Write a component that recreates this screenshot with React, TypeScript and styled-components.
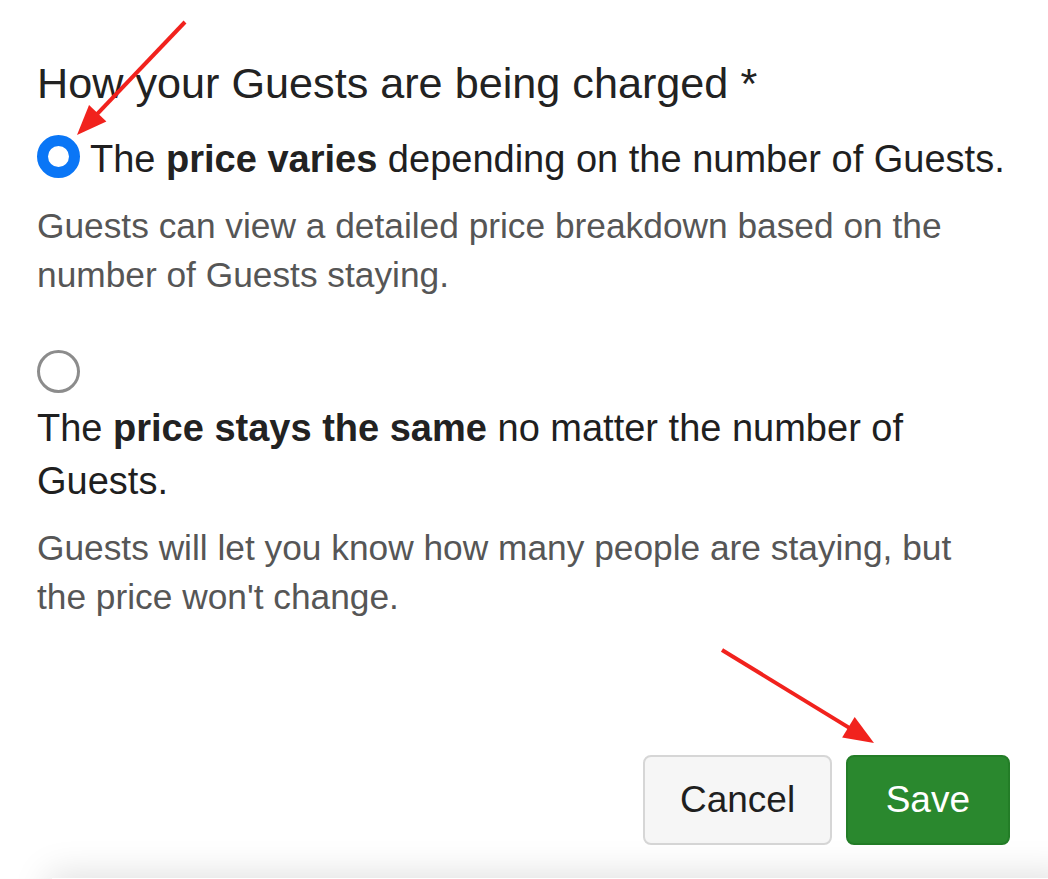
import * as React from "react";
import styled, { createGlobalStyle } from "styled-components";

const GlobalStyle = createGlobalStyle`
  html, body {
    margin: 0;
    padding: 0;
    background: #ffffff;
    overflow: hidden;
  }
  body {
    font-family: "Liberation Sans", Helvetica, Arial, sans-serif;
    color: #222222;
  }
`;

const Page = styled.div`
  position: relative;
  width: 1048px;
  height: 879px;
  box-sizing: border-box;
  padding: 53px 39px 0 37px;
  display: flex;
  flex-direction: column;
`;

const Heading = styled.h3`
  margin: 0 0 20px;
  font-size: 43.2px;
  font-weight: 400;
  line-height: 60px;
  color: #222222;
`;

const Option = styled.div<{ $first?: boolean }>`
  margin-top: ${(p) => (p.$first ? "0" : "49px")};
`;

const OptionRow = styled.label`
  display: flex;
  flex-wrap: wrap;
  align-items: flex-start;
  column-gap: 10px;
  row-gap: 9px;
  cursor: pointer;
`;

const Radio = styled.span<{ $checked?: boolean }>`
  flex: none;
  box-sizing: border-box;
  width: 43px;
  height: 43px;
  margin-top: 2px;
  border-radius: 50%;
  background: #ffffff;
  border: ${(p) => (p.$checked ? "11.5px solid #0a76f6" : "3px solid #8c8c8c")};
`;

const OptionText = styled.span`
  font-size: 38px;
  line-height: 53px;
  color: #1f1f1f;

  b {
    font-weight: 700;
    color: #222222;
  }
`;

const Help = styled.p`
  margin: 15px 0 0;
  font-size: 35.3px;
  line-height: 49px;
  color: #565656;
`;

const Actions = styled.div`
  margin: 134px -1px 0 0;
  display: flex;
  justify-content: flex-end;
  gap: 14px;
`;

const Button = styled.button<{ $primary?: boolean }>`
  box-sizing: border-box;
  height: 90px;
  padding: 0 ${(p) => (p.$primary ? "38px" : "34.5px")};
  border-radius: 8px;
  font-family: "Liberation Sans", Helvetica, Arial, sans-serif;
  font-size: 37px;
  cursor: pointer;
  border: 2px solid ${(p) => (p.$primary ? "#237d27" : "#d6d6d6")};
  background: ${(p) => (p.$primary ? "#2a882e" : "#f6f6f6")};
  color: ${(p) => (p.$primary ? "#ffffff" : "#1f1f1f")};
`;

const Shade = styled.div`
  margin: 33px -60px 0 15px;
  height: 40px;
  flex: none;
  box-shadow: 0 0 36px 4px rgba(0, 0, 0, 0.13);
`;

const Annotations = styled.svg`
  position: absolute;
  left: 0;
  top: 0;
  width: 1048px;
  height: 879px;
  pointer-events: none;
`;

function Arrow({ x1, y1, x2, y2 }: { x1: number; y1: number; x2: number; y2: number }) {
  const dx = x2 - x1;
  const dy = y2 - y1;
  const len = Math.hypot(dx, dy);
  const ux = dx / len;
  const uy = dy / len;
  const bx = x2 - 30 * ux;
  const by = y2 - 30 * uy;
  const nx = -uy;
  const ny = ux;
  const head = `${x2},${y2} ${bx + 12 * nx},${by + 12 * ny} ${bx - 12 * nx},${by - 12 * ny}`;
  return (
    <g>
      <line x1={x1} y1={y1} x2={bx + 2 * ux} y2={by + 2 * uy} stroke="#f1221d" strokeWidth={4} />
      <polygon points={head} fill="#f1221d" />
    </g>
  );
}

export default function App() {
  return (
    <>
      <GlobalStyle />
      <Page>
        <Heading>How your Guests are being charged *</Heading>

        <Option $first>
          <OptionRow>
            <Radio $checked />
            <OptionText>
              The <b>price varies</b> depending on the number of Guests.
            </OptionText>
          </OptionRow>
          <Help>
            Guests can view a detailed price breakdown based on the number of Guests staying.
          </Help>
        </Option>

        <Option>
          <OptionRow>
            <Radio />
            <OptionText>
              The <b>price stays the same</b> no matter the number of Guests.
            </OptionText>
          </OptionRow>
          <Help>
            Guests will let you know how many people are staying, but the price won't change.
          </Help>
        </Option>

        <Actions>
          <Button type="button">Cancel</Button>
          <Button type="button" $primary>
            Save
          </Button>
        </Actions>

        <Shade />

        <Annotations viewBox="0 0 1048 879">
          <Arrow x1={185} y1={22} x2={77} y2={135} />
          <Arrow x1={722} y1={650} x2={874} y2={743} />
        </Annotations>
      </Page>
    </>
  );
}
